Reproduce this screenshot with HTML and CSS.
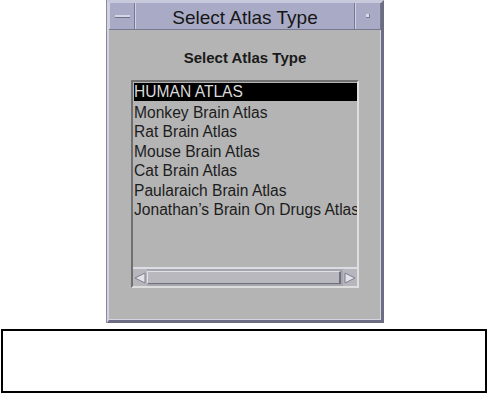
FILE: index.html
```html
<!DOCTYPE html>
<html lang="en">
<head>
  <meta charset="UTF-8" />
  <meta name="viewport" content="width=device-width, initial-scale=1.0" />
  <title>Select Atlas Type</title>
  <link rel="stylesheet" href="styles.css">
</head>
<body>
  <div class="window">
    <div class="titlebar">
      <div class="tb-btn"><span class="dash"></span></div>
      <div class="tb-title">Select Atlas Type</div>
      <div class="tb-btn"><span class="dot"></span></div>
    </div>
    <div class="content">
      <h1 class="heading">Select Atlas Type</h1>
      <div class="listbox">
        <ul class="items">
          <li class="selected">HUMAN ATLAS</li>
          <li>Monkey Brain Atlas</li>
          <li>Rat Brain Atlas</li>
          <li>Mouse Brain Atlas</li>
          <li>Cat Brain Atlas</li>
          <li>Paularaich Brain Atlas</li>
          <li>Jonathan’s Brain On Drugs Atlas</li>
        </ul>
        <div class="hscroll">
          <div class="arrow">
            <svg width="14" height="14" viewBox="0 0 14 14"><polygon points="12,2 12,12 2,7" fill="#e2e2ea" stroke="#7e7e8c" stroke-width="1"/></svg>
          </div>
          <div class="trough"><div class="thumb"></div></div>
          <div class="arrow">
            <svg width="14" height="14" viewBox="0 0 14 14"><polygon points="2,2 2,12 12,7" fill="#e2e2ea" stroke="#7e7e8c" stroke-width="1"/></svg>
          </div>
        </div>
      </div>
    </div>
  </div>

  <div class="message"></div>
</body>
</html>
```

FILE: styles.css
```css
body {
  margin: 0;
  background: #fff;
  font-family: "Liberation Sans", Arial, sans-serif;
}
.window {
  margin-left: 107px;
  width: 277px;
  height: 323px;
  box-sizing: border-box;
  display: flex;
  flex-direction: column;
  background: #b4b4b4;
  border-left: 2px solid #d2d2e2;
  border-right: 3px solid #6c6c82;
  border-bottom: 3px solid #6c6c82;
  border-top: 3px solid #c8c9dc;
  box-shadow: inset -1px -1px 0 #d4d4e4, -1px 0 0 #8a8a9c;
}
.titlebar {
  display: flex;
  height: 26px;
  background: #a9abc6;
  border-bottom: 1px solid #77778e;
}
.tb-btn {
  width: 24px;
  display: flex;
  align-items: center;
  justify-content: center;
  border-left: 1px solid #d0d1e2;
  border-right: 1px solid #77778e;
}
.dash {
  width: 15px;
  height: 2px;
  background: #d6d6e6;
  border-bottom: 1px solid #6e6e84;
}
.dot {
  width: 3px;
  height: 3px;
  background: #dcdce8;
  border-right: 1px solid #7a7a90;
  border-bottom: 1px solid #7a7a90;
}
.tb-title {
  flex: 1;
  text-align: center;
  font-size: 19px;
  line-height: 26px;
  padding-top: 2px;
  box-sizing: border-box;
  color: #161616;
  border-left: 1px solid #d0d1e2;
  border-right: 1px solid #77778e;
}
.content {
  flex: 1;
  display: flex;
  flex-direction: column;
  align-items: center;
}
.heading {
  margin: 19px 0 13px;
  font-size: 15px;
  line-height: 18px;
  font-weight: bold;
  color: #1a1a1a;
}
.listbox {
  width: 228px;
  height: 208px;
  box-sizing: border-box;
  display: flex;
  flex-direction: column;
  border-top: 2px solid #707070;
  border-left: 2px solid #707070;
  border-bottom: 2px solid #dedede;
  border-right: 2px solid #dedede;
}
.items {
  flex: 1;
  margin: 0;
  padding: 1px 0 0 1px;
  list-style: none;
  overflow: hidden;
}
.items li {
  height: 19.5px;
  line-height: 19px;
  font-size: 15.6px;
  color: #1c1c1c;
  white-space: nowrap;
  overflow: hidden;
}
.items li.selected {
  background: #000;
  color: #dadada;
  height: 18px;
  line-height: 18px;
  margin-bottom: 1.5px;
}
.hscroll {
  display: flex;
  height: 17px;
  border-top: 2px solid #dcdce4;
}
.arrow {
  width: 14px;
  display: flex;
  align-items: center;
  justify-content: center;
  background: #b6b6bc;
}
.trough {
  flex: 1;
  display: flex;
  padding: 2px 0;
  background: #a6a6ae;
}
.thumb {
  flex: 1;
  margin-right: 2px;
  background: #b8b8be;
  border-top: 1px solid #e0e0e8;
  border-left: 1px solid #e0e0e8;
  border-bottom: 1px solid #70707c;
  border-right: 2px solid #70707c;
}
.message {
  margin: 6px 0 0 1px;
  width: 486px;
  height: 64px;
  box-sizing: border-box;
  border: 2px solid #000;
}
```
